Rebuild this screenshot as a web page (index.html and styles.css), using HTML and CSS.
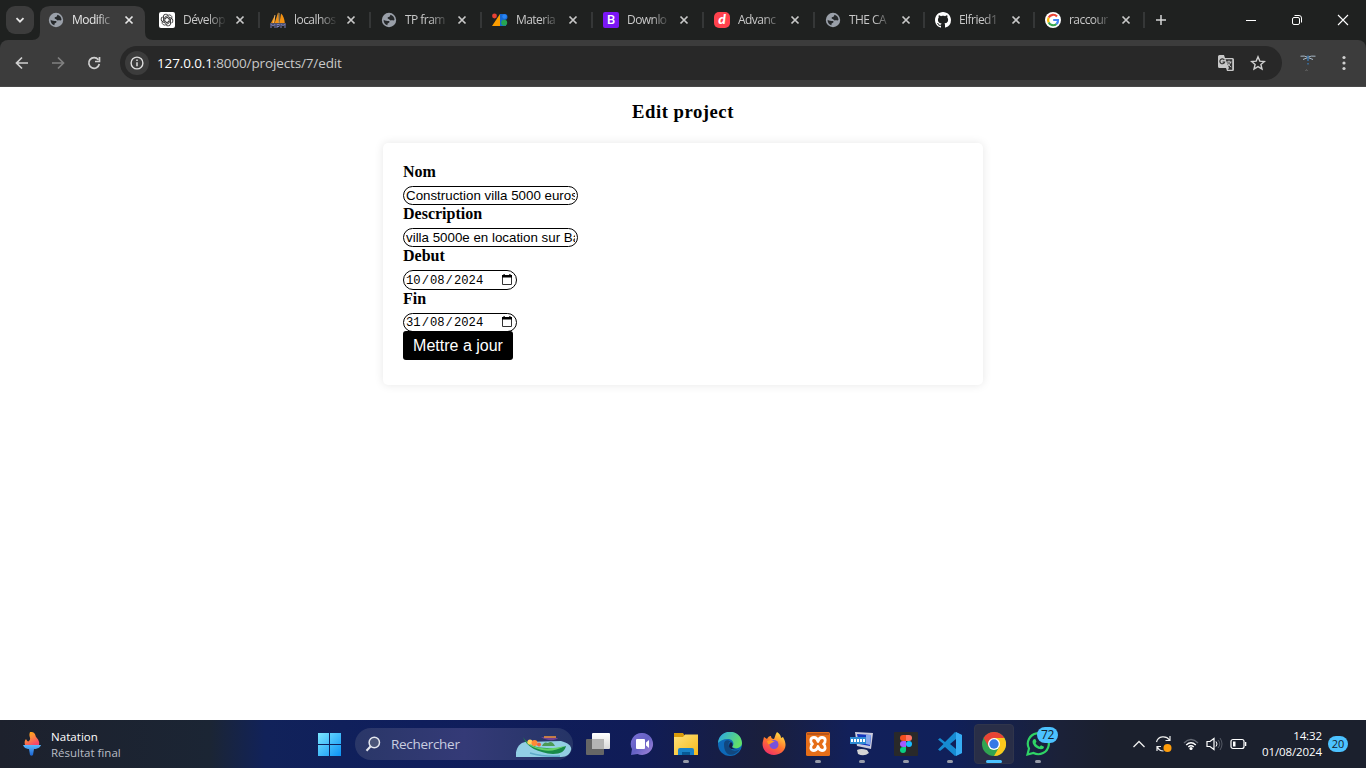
FILE: index.html
```html
<!DOCTYPE html>
<html lang="fr">
<head>
<meta charset="utf-8">
<title>Modification</title>
<link rel="stylesheet" href="styles.css">
</head>
<body>
<svg class="defs" width="0" height="0">
  <symbol id="globe" viewBox="0 0 16 16"><circle cx="8" cy="8" r="7.2" fill="#9aa0a9"/><path d="M2.600 7.800c1.500 1.700 3.700.8 5.200 1.300 1.600.5.300 1.800-.7 2.100-.8.300-.5 1-.7 2.100C3.800 12.700 2.400 10.300 2.600 7.800zM9.500 2.700c2.300.6 3.900 2.500 4 5-.8 1.500-2 .2-3 .6-1.500.5-2-1-3-1.300-1.300-.5-1.200-1.800.2-2 1.300-.2 1.200-1.200 1.800-2.300z" fill="#26292b"/></symbol>
  <symbol id="x" viewBox="0 0 10 10"><path d="M1.500 1.500l7 7m0-7l-7 7" stroke="currentColor" stroke-width="1.700" fill="none"/></symbol>
  <symbol id="calendar" viewBox="0 0 12 13"><path d="M1.500 3h9v8.500h-9z" fill="none" stroke="#333" stroke-width="1"/><path d="M1 2h10v2.500H1zM2.500 1h1.200v1.500H2.500zM8.300 1h1.200v1.500H8.300z" fill="#000"/></symbol>
</svg>
<header class="tabstrip">
  <div class="search-tabs"><svg width="10" height="10" viewBox="0 0 10 10"><path d="M1.500 3.200L5 6.700l3.500-3.500" fill="none" stroke="#e6e6e6" stroke-width="1.800"/></svg></div>
  <nav class="tabs">
    <div class="tab active"><svg class="shape" viewBox="0 0 121 34"><path d="M0 34Q8 34 8 26V10Q8 0 18 0H103Q113 0 113 10V26Q113 34 121 34z" fill="#3c3c3c"/></svg><svg class="fav"><use href="#globe"/></svg><span class="title">Modific</span><svg class="close"><use href="#x"/></svg></div>
    <div class="tab"><svg class="fav" viewBox="0 0 16 16"><rect width="16" height="16" rx="2" fill="#fff"/><g fill="none" stroke="#333" stroke-width=".9"><path id="petal" d="M5.800 9.300V5.200L9 3.300a2.600 2.600 0 0 1 3.900 2.600"/><use href="#petal" transform="rotate(60 8 8)"/><use href="#petal" transform="rotate(120 8 8)"/><use href="#petal" transform="rotate(180 8 8)"/><use href="#petal" transform="rotate(240 8 8)"/><use href="#petal" transform="rotate(300 8 8)"/></g></svg><span class="title">Dévelop</span><svg class="close"><use href="#x"/></svg><i class="sep"></i></div>
    <div class="tab"><svg class="fav" viewBox="0 0 16 16"><path d="M5 3L1 11h3.500zM8.200 0C7 4 5.500 8 4.800 11h4zM11 1.500c2.500 2 3.500 6 3.800 9.500H9.500z" fill="#f29111"/><path d="M5 3L3.500 11M9 1v10" stroke="#ffd08a" stroke-width=".7"/><path d="M1 16v-3.500l2 1.500 2-1.500V16m2 0v-3.500h2.300l-.3 2H7m4 1.500v-3.500l2 1 2-1V16M0 12h16" stroke="#7a7fb8" stroke-width="1" fill="none"/></svg><span class="title">localhos</span><svg class="close"><use href="#x"/></svg><i class="sep"></i></div>
    <div class="tab"><svg class="fav"><use href="#globe"/></svg><span class="title">TP fram</span><svg class="close"><use href="#x"/></svg><i class="sep"></i></div>
    <div class="tab"><svg class="fav" viewBox="0 0 16 16"><path d="M8 2v12H0z" fill="#fb9d00"/><circle cx="2.500" cy="4" r="2.400" fill="#e94235"/><path d="M8 2h4.500a3 3 0 0 1 0 6L14 11v3H8z" fill="#1769d2"/><circle cx="12.200" cy="10.800" r="3" fill="#27a552"/><circle cx="12.500" cy="4.500" r="2.200" fill="#2884f5"/></svg><span class="title">Materia</span><svg class="close"><use href="#x"/></svg><i class="sep"></i></div>
    <div class="tab"><span class="fav bootstrap">B</span><span class="title">Downlo</span><svg class="close"><use href="#x"/></svg><i class="sep"></i></div>
    <div class="tab"><span class="fav dribble">d</span><span class="title">Advanc</span><svg class="close"><use href="#x"/></svg><i class="sep"></i></div>
    <div class="tab narrow"><svg class="fav"><use href="#globe"/></svg><span class="title">THE CA</span><svg class="close"><use href="#x"/></svg><i class="sep"></i></div>
    <div class="tab narrow"><svg class="fav" viewBox="0 0 16 16"><path fill="#fff" d="M8 0C3.580 0 0 3.580 0 8c0 3.540 2.290 6.530 5.470 7.590.4.070.550-.17.550-.380 0-.19-.010-.82-.010-1.490-2.010.37-2.530-.49-2.690-.94-.090-.23-.48-.94-.82-1.130-.28-.15-.68-.52-.010-.53.630-.010 1.080.58 1.230.82.720 1.210 1.870.87 2.330.66.070-.52.280-.87.510-1.070-1.780-.2-3.640-.89-3.640-3.950 0-.87.310-1.590.82-2.150-.080-.2-.36-1.020.080-2.120 0 0 .67-.21 2.200.82.640-.18 1.320-.27 2-.27s1.360.090 2 .27c1.530-1.040 2.200-.82 2.200-.82.440 1.100.16 1.920.080 2.120.51.560.82 1.270.82 2.150 0 3.070-1.870 3.750-3.650 3.950.29.250.54.730.54 1.480 0 1.070-.010 1.930-.010 2.200 0 .21.150.46.550.38A8 8 0 0 0 16 8c0-4.420-3.580-8-8-8z"/></svg><span class="title">Elfried1</span><svg class="close"><use href="#x"/></svg><i class="sep"></i></div>
    <div class="tab narrow"><svg class="fav" viewBox="0 0 16 16"><circle cx="8" cy="8" r="8" fill="#fff"/><g fill="none" stroke-width="2.200"><path d="M12 4.500A5 5 0 0 0 3.700 5.600" stroke="#ea4335"/><path d="M3.700 5.600a5 5 0 0 0 0 4.800" stroke="#fbbc05"/><path d="M3.700 10.400A5 5 0 0 0 11.500 12" stroke="#34a853"/><path d="M11.500 12A5 5 0 0 0 13 8H8.200" stroke="#4285f4"/></g></svg><span class="title">raccour</span><svg class="close"><use href="#x"/></svg><i class="sep"></i></div>
  </nav>
  <svg class="newtab" width="12" height="12" viewBox="0 0 12 12"><path d="M6 1v10M1 6h10" stroke="#d5d5d5" stroke-width="1.500"/></svg>
  <div class="winctl">
    <svg viewBox="0 0 12 12"><path d="M1 6.500h10" stroke="#fff"/></svg>
    <svg viewBox="0 0 12 12"><g fill="none" stroke="#fff"><rect x="1.500" y="3.500" width="7" height="7" rx="1.500"/><path d="M3.500 1.500H8a2.500 2.500 0 0 1 2.500 2.500v4.500"/></g></svg>
    <svg viewBox="0 0 12 12"><path d="M1 1l10 10M11 1L1 11" stroke="#fff" stroke-width="1.100"/></svg>
  </div>
</header>
<div class="toolbar-wrap">
<div class="toolbar">
  <svg class="nav" viewBox="0 0 16 16"><path d="M14 8H3M8 2.500L2.500 8 8 13.500" fill="none" stroke="#d0d0d0" stroke-width="1.700"/></svg>
  <svg class="nav" viewBox="0 0 16 16"><path d="M2 8h11M8 2.500L13.500 8 8 13.500" fill="none" stroke="#808080" stroke-width="1.700"/></svg>
  <svg class="nav" viewBox="0 0 16 16"><path d="M12.300 4.700A5.300 5.300 0 1 0 13.300 9M13.500 2v4.500H9" fill="none" stroke="#d0d0d0" stroke-width="1.700"/></svg>
  <div class="omnibox">
    <span class="info"><svg width="14" height="14" viewBox="0 0 14 14"><circle cx="7" cy="7" r="5.900" fill="none" stroke="#ddd" stroke-width="1.400"/><path d="M7 6.200v4M7 3.500V5" stroke="#ddd" stroke-width="1.500"/></svg></span>
    <span class="url"><b>127.0.0.1</b>:8000/projects/7/edit</span>
    <svg class="translate" viewBox="0 0 18 18"><path d="M2.500 1H7l1 3h7.500A1.500 1.500 0 0 1 17 5.500v10a1.500 1.500 0 0 1-1.500 1.500H10l-1-3H2.500A1.500 1.500 0 0 1 1 12.500v-10A1.500 1.500 0 0 1 2.500 1z" fill="#c7c7c7"/><path d="M8.500 5.200h6.700v10.500h-4.500L12 14z" fill="#333"/><path d="M9.500 8h5M12 6.500V8m1.700 0c-.5 2-2 3.500-3.700 4.500M10.700 9c.6 1.500 2 3 3.500 4" fill="none" stroke="#ccc"/><path d="M7.300 6A2.400 2.400 0 1 0 7.600 8H5.500" fill="none" stroke="#333" stroke-width="1.200"/></svg>
    <svg class="star" viewBox="0 0 16 16"><path d="M8 1.800l1.800 4.300 4.600.4-3.500 3 1.100 4.500-4-2.400L4 14l1.100-4.500-3.500-3 4.600-.4z" fill="none" stroke="#d0d0d0" stroke-width="1.400"/></svg>
  </div>
  <svg class="avatar" viewBox="0 0 20 20"><path d="M2.500 3.200q4-.7 7 1 4-1.700 8-1M5 6.500l5-2 5 2" stroke="#a9b9c7" fill="none"/><path d="M10 2.500V8M10 10v1.500" stroke="#3973a8" stroke-width="1.500"/><path d="M7.500 18l1-1.500 1 1.500" stroke="#666" fill="none"/></svg>
  <svg class="menu" viewBox="0 0 4 16"><g fill="#d0d0d0"><circle cx="2" cy="2.500" r="1.600"/><circle cx="2" cy="8" r="1.600"/><circle cx="2" cy="13.500" r="1.600"/></g></svg>
</div>
</div>
<main class="page">
  <h1>Edit project</h1>
  <form class="card">
    <label>Nom</label>
    <div class="field"><span>Construction villa 5000 euros</span></div>
    <label>Description</label>
    <div class="field"><span>villa 5000e en location sur Ba</span></div>
    <label>Debut</label>
    <div class="field date tall"><span>10</span>/<span>08</span>/<span>2024</span><svg><use href="#calendar"/></svg></div>
    <label>Fin</label>
    <div class="field date"><span>31</span>/<span>08</span>/<span>2024</span><svg><use href="#calendar"/></svg></div>
    <button type="button">Mettre a jour</button>
  </form>
</main>
<footer class="taskbar">
  <div class="widget">
    <svg width="20" height="26" viewBox="0 0 20 26"><defs><linearGradient id="fl" x2=".6" y2="1"><stop stop-color="#ffb400"/><stop offset=".5" stop-color="#ff8a3c"/><stop offset="1" stop-color="#f5486a"/></linearGradient><linearGradient id="tb" x2="0" y2="1"><stop stop-color="#5bb8ff"/><stop offset="1" stop-color="#1a62d0"/></linearGradient></defs><path d="M8 1c5 0 5 2 6 5 2 2 4 5 3 8H3C2 11 3 9 4 8c1 2 2 3 3 2 3-3-1-4 1-9z" fill="url(#fl)"/><path d="M1 14h18c-1 3-4 3.500-5 4h-2l-1 6q-1.500 1.500-3 0l-1-6H6C4 17.500 2 17 1 14z" fill="url(#tb)"/></svg>
    <div><strong>Natation</strong><span>Résultat final</span></div>
  </div>
  <svg class="start" viewBox="0 0 23 23"><defs><linearGradient id="win" gradientUnits="userSpaceOnUse" x2="23" y2="23"><stop stop-color="#7be6ff"/><stop offset="1" stop-color="#0b92f5"/></linearGradient></defs><path d="M0 0h11v11H0zm12 0h11v11H12zM0 12h11v11H0zm12 0h11v11H12z" fill="url(#win)"/></svg>
  <div class="search">
    <svg width="16" height="16" viewBox="0 0 16 16"><circle cx="9.300" cy="6.500" r="5.200" fill="#4a5579" stroke="#e3e6ee" stroke-width="1.500"/><path d="M5.700 10.300L1.500 14.700" stroke="#e3e6ee" stroke-width="2"/></svg>
    <span>Rechercher</span>
    <svg class="boat" viewBox="0 0 56 22"><path d="M0 21C-1 12 4 7 9 6l36-1c7 2 11 5 10 9-1 4-4 7-10 7z" fill="#92cfe4"/><path d="M14 17q14 4 30 3" stroke="#5eaac7" stroke-width="1.500" fill="none"/><path d="M7 1c5 8 13 11 24 11 7 1 13 0 19-2-1 5-5 8-13 8C23 17 10 11 7 1z" fill="#188a49"/><path d="M9 4c7 8 20 11 40 6-8 4-15 6-23 4C17 12 12 9 9 4z" fill="#65d268"/><circle cx="14" cy="6" r="2.600" fill="#ffd160"/><circle cx="18.500" cy="7" r="3" fill="#ff8a35"/><circle cx="23" cy="8.500" r="2" fill="#f0643b"/><path d="M26 10q2-5 6-3 4-3 7 3z" fill="#4b9a55"/><path d="M25 1l17 1c-2 3-12 3-17-1z" fill="#704093"/><path d="M28 1h12" stroke="#f3963b" stroke-width="1.500"/></svg>
  </div>
  <div class="apps">
    <div class="app"><svg viewBox="0 0 24 24"><defs><linearGradient id="tv" x2="0" y2="1"><stop stop-color="#fff"/><stop offset="1" stop-color="#d8d8d8"/></linearGradient></defs><rect x="6" y="1" width="18" height="16" rx="1" fill="url(#tv)"/><rect x="0" y="7" width="18" height="16" rx="1" fill="#666"/><path d="M6 7h12v10H6z" fill="#b4b4b4"/></svg></div>
    <div class="app"><svg viewBox="0 0 24 24"><defs><linearGradient id="tm" x2="1" y2="1"><stop stop-color="#7a6fd6"/><stop offset=".5" stop-color="#6461c4"/><stop offset="1" stop-color="#a887dc"/></linearGradient></defs><path d="M12.500 1a11 11 0 1 1-5 21L1 23l1-6A11 11 0 0 1 12.500 1z" fill="url(#tm)"/><rect x="6" y="7" width="9" height="10" rx="1" fill="#fff"/><path d="M16 10.500L19 8v8l-3-2.500z" fill="#fff"/></svg></div>
    <div class="app run"><svg viewBox="0 0 24 24"><defs><linearGradient id="fo" x2="1" y2="1"><stop stop-color="#ffe27a"/><stop offset="1" stop-color="#f6b91b"/></linearGradient></defs><path d="M0 1h9l2 3-2 3H0z" fill="#d99a09"/><path d="M0 5h9l2-2.500h13V23H0z" fill="url(#fo)"/><path d="M4 23v-5q0-2 2-2h12q2 0 2 2v5z" fill="#1982c8"/><path d="M8 20h8v3H8z" fill="#075996"/></svg></div>
    <div class="app"><svg viewBox="0 0 24 24"><defs><linearGradient id="ed" x2="1" y2=".4"><stop stop-color="#28a5ee"/><stop offset="1" stop-color="#62df69"/></linearGradient></defs><circle cx="12" cy="12" r="12" fill="#0d69b8"/><path d="M0 11C1-4 23-4 24 11c0 6-8 6-10 4 3-3 1-8-4-8-5 0-8 2-10 4z" fill="url(#ed)"/><path d="M6 12c0-4 4-5 7-2-3 0-3 3-1 6 3 4 7 3 10 1-5 8-16 9-16-5z" fill="#11477f"/><path d="M13 10c2 1 2 3 1 5 2 3 6 2 8 1-3 2-11 2-11-2q0-3 2-4z" fill="#161d43"/></svg></div>
    <div class="app"><svg viewBox="0 0 24 24"><defs><linearGradient id="ff" x1=".8" x2=".2" y2="1"><stop stop-color="#ffe845"/><stop offset=".5" stop-color="#ff762d"/><stop offset="1" stop-color="#ef286d"/></linearGradient></defs><path d="M15 0c3 2 4 4 4 6l2-1c7 12-2 18-9 18C4 23-1 16 1 9l1-4 3 2c1-2 2-3 4-3 0 2 1 3 3 3 1-2 1-4 3-7z" fill="url(#ff)"/><circle cx="12" cy="12.500" r="4.500" fill="#7751db"/><path d="M5 9c5-2 6 0 8 1-4 0-4 3-7 2z" fill="#ff9b21"/></svg></div>
    <div class="app run"><svg viewBox="0 0 24 24"><rect width="24" height="24" rx="1.500" fill="#e66e18"/><path d="M1 1h22v2H1z" fill="#b9551a"/><path d="M12 9.500Q11 5.500 8 5.500c-4 0-4 4.500-1.500 6.500C4 14 4 18.500 8 18.500q3 0 4-4 1 4 4 4c4 0 4-4.500 1.500-6.500C20 10 20 5.500 16 5.500q-3 0-4 4z" fill="none" stroke="#fff" stroke-width="2.800" stroke-linejoin="round"/></svg></div>
    <div class="app run"><svg viewBox="0 0 24 24"><path d="M5 0l18 1-2 16L7 14z" fill="#ccd"/><path d="M7 2l14 1-1 11-11-2z" fill="#1535bd"/><path d="M16 3h5l-1 10-4-1z" fill="#87a8ee"/><rect y="5" width="16" height="7" fill="#2e8cd4"/><path d="M1 8.500h14" stroke="#fff" stroke-width="3" stroke-dasharray="2 1"/><path d="M7 18q4-2 10 0l2 3q-5 4-11 1z" fill="#d5d5d5"/></svg></div>
    <div class="app run"><svg viewBox="0 0 24 24"><rect width="24" height="24" rx="1" fill="#292929"/><path d="M9 3h3v6H9a3 3 0 0 1 0-6z" fill="#f24e1e"/><path d="M12 3h3a3 3 0 0 1 0 6h-3z" fill="#ff7262"/><path d="M9 9h3v6H9a3 3 0 0 1 0-6z" fill="#a259ff"/><circle cx="15" cy="12" r="3" fill="#1abcfe"/><path d="M9 15h3v3a3 3 0 1 1-3-3z" fill="#0acf83"/></svg></div>
    <div class="app run"><svg viewBox="0 0 24 24"><path d="M17 0l7 3v18l-7 3L7 15l-5 4-2-1.500L5.500 12 0 7.500 2 6l5 4zm1 7l-6 5 6 5z" fill="#168bd2"/><path d="M18 0l6 3v18l-6 3z" fill="#36adf4"/></svg></div>
    <div class="app current"><svg viewBox="0 0 24 24"><circle cx="12" cy="12" r="12" fill="#30a451"/><path d="M1.600 6A12 12 0 0 1 22.400 6H12l-5.200 9z" fill="#e84435"/><path d="M12 6h10.400A12 12 0 0 1 12 24l5.200-9z" fill="#fbc91c"/><circle cx="12" cy="12" r="6" fill="#fff"/><circle cx="12" cy="12" r="4.700" fill="#3478e6"/></svg></div>
    <div class="app run"><svg viewBox="0 0 24 24"><path d="M1.500 22.500l1.500-6A10.500 10.500 0 1 1 7.500 21z" fill="none" stroke="#2fd366" stroke-width="2.200"/><path d="M8 7l1.500.3 1 2.500-1 1.400q1.300 2.500 4 3.500l1.500-1.500 3 1.500c0 5-11 2-11.500-5Q6.500 8 8 7z" fill="#2fd366"/></svg><span class="badge">72</span></div>
  </div>
  <div class="tray">
    <svg width="14" height="10" viewBox="0 0 14 10"><path d="M1.500 8L7 2.500 12.500 8" fill="none" stroke="#eee" stroke-width="1.300"/></svg>
    <svg class="sync" viewBox="0 0 17 18"><path d="M1.500 7C3 1 11 0 14.500 5M15 1v4.500h-4.500M2 16v-4.500h4M2.500 12q1.500 4 6 4" fill="none" stroke="#eee" stroke-width="1.200"/><circle cx="12.500" cy="13" r="4" fill="#ff9d0b"/></svg>
    <svg class="wifi" viewBox="0 0 16 14"><path d="M1 6Q8-1 15 6" fill="none" stroke="#666b75" stroke-width="1.300"/><path d="M3.200 8Q8 3.500 12.800 8M5.300 10Q8 7.500 10.700 10" fill="none" stroke="#fff" stroke-width="1.400"/><circle cx="8" cy="11.500" r="1.600" fill="#fff"/></svg>
    <svg class="sound" viewBox="0 0 17 14"><path d="M1 4.500h3L8 1.500v11l-4-3H1z" fill="none" stroke="#fff" stroke-width="1.200"/><path d="M10 4.500q2 2.500 0 5" fill="none" stroke="#fff"/><path d="M12 3q3.500 4 0 8M14 1q4 6 0 12" fill="none" stroke="#555a65"/></svg>
    <svg class="battery" viewBox="0 0 17 12"><rect x="1" y="1.500" width="13" height="9" rx="2" fill="none" stroke="#fff" stroke-width="1.200"/><path d="M3 3.500h2.500v5H3zM15 4h1.300v4H15z" fill="#fff"/></svg>
    <div class="clock"><span>14:32</span><span>01/08/2024</span></div>
    <span class="count">20</span>
  </div>
</footer>
</body>
</html>
```
FILE: styles.css
```css
* { box-sizing: border-box; }
body { margin: 0; width: 1366px; height: 768px; overflow: hidden; display: flex; flex-direction: column; background: #fff; font-family: "Open Sans", "Noto Sans", sans-serif; }
svg { display: block; flex: none; }
.defs { position: absolute; }
.tabstrip { height: 40px; background: #1f2120; display: flex; align-items: center; flex: none; }
.search-tabs { width: 28px; height: 28px; margin: 0 4px 0 6px; border-radius: 9px; background: #3c3c3c; display: flex; align-items: center; justify-content: center; }
.tabs { display: flex; height: 40px; }
.tab { width: 111px; height: 40px; padding-left: 10px; display: flex; align-items: center; position: relative; color: #c8c8c8; }
.tab.narrow { width: 110px; }
.tab.active { color: #e6e6e6; }
.shape { position: absolute; left: -6px; top: 6px; width: 121px; height: 34px; }
.fav { width: 16px; height: 16px; position: relative; flex: none; }
.bootstrap { background: #7b16f5; border-radius: 2px; color: #fff; font: 500 13px/16px Roboto, sans-serif; text-align: center; }
.dribble { background: #ff424d; border-radius: 5px; color: #fff; font: italic 900 14px/14px Lato, sans-serif; text-align: center; }
.title { position: relative; width: 42px; margin-left: 8px; white-space: nowrap; font-size: 12px; letter-spacing: -.55px; line-height: 18px; -webkit-mask-image: linear-gradient(90deg, #000 60%, rgba(0,0,0,.1)); mask-image: linear-gradient(90deg, #000 60%, rgba(0,0,0,.1)); }
.close { position: relative; width: 10px; height: 10px; margin-left: 10px; }
.narrow .close { margin-left: 11px; }
.narrow .title { width: 41px; }
.sep { width: 2px; height: 16px; margin-left: auto; background: #353737; }
.newtab { margin-left: 10px; }
.winctl { margin-left: auto; display: flex; gap: 34px; padding-right: 17px; }
.winctl svg { width: 12px; height: 12px; }
.toolbar-wrap { flex: none; background: #1f2120; }
.toolbar { height: 47px; display: flex; align-items: center; background: #3c3c3c; border-radius: 8px 8px 0 0; padding: 0 20px 0 14px; border-bottom: 1px solid #484848; }
.nav { width: 16px; height: 16px; margin-right: 20px; }
.nav + .nav + .nav { margin-right: 18px; }
.omnibox { width: 1162px; height: 34px; border-radius: 17px; background: #282828; display: flex; align-items: center; padding: 0 16px 0 5px; }
.info { width: 24px; height: 24px; border-radius: 50%; background: #3c3c3c; display: flex; align-items: center; justify-content: center; }
.url { margin-left: 8px; font-size: 13.500px; letter-spacing: -.13px; color: #c9c9c9; flex: 1; white-space: nowrap; }
.url b { font-weight: 400; color: #fff; }
.translate { width: 18px; height: 18px; margin-right: 15px; }
.star { width: 16px; height: 16px; }
.avatar { width: 20px; height: 20px; margin-left: 16px; }
.menu { width: 4px; height: 16px; margin-left: auto; }
.page { flex: 1; color: #000; }
h1 { margin: 14px 0 20px; text-align: center; font: bold 18.720px/22px "Liberation Serif", serif; letter-spacing: .5px; }
.card { width: 600px; height: 242px; margin: 0 auto; padding: 20px; border-radius: 5px; background: #fff; box-shadow: 0 0 10px rgba(0,0,0,.1); display: flex; flex-direction: column; align-items: flex-start; }
label { height: 18px; margin-bottom: 5px; font: bold 16px/18px "Liberation Serif", serif; }
.field { width: 175px; height: 19px; flex: none; border: 1px solid #000; border-radius: 10px; padding: 0 2px; font: 13.330px/17px "Liberation Sans", sans-serif; }
.field > span { display: block; overflow: hidden; white-space: nowrap; }
.date { width: 114px; display: flex; align-items: center; font: 12.200px/18px "Liberation Mono", monospace; }
.date > span { padding: 0 1px 0 0; }
.date > span + span { padding-left: 1px; }
.date svg { width: 12px; height: 13px; margin: -2px 1px 0 auto; }
.tall { height: 20px; padding-top: 1px; }
.tall svg { margin-top: -3px; }
button { position: relative; width: 110px; height: 29px; flex: none; margin: -1px 0 0; padding: 0; border: 0; border-radius: 3px; background: #000; color: #fff; font: 16px "Liberation Sans", sans-serif; }
.taskbar { height: 48px; flex: none; display: flex; align-items: center; position: relative; color: #fff; font-size: 12px; background: linear-gradient(90deg, #1d212d 0, #1b2534 210px, #11225a 265px, #0f1e5c 420px, #101c57 640px, #1a1f3c 765px, #12205a 850px, #10205a 950px, #1b2138 1060px, #1b202d 1110px); }
.widget { width: 295px; padding-left: 22px; display: flex; align-items: center; gap: 9px; line-height: 16px; font-size: 11.500px; }
.widget > div { margin-top: 2px; }
.widget strong, .widget div span { display: block; font-weight: 400; }
.widget strong { letter-spacing: .05px; }
.widget div span { color: #b9bdc5; }
.start { width: 23px; height: 23px; margin-left: 23px; }
.search { width: 218px; height: 32px; margin-left: 14px; border-radius: 16px; background: linear-gradient(90deg, #2a3768, #343a77 50%, #253466); display: flex; align-items: center; padding-left: 10px; overflow: hidden; }
.search span { margin-left: 10px; font-size: 13.500px; letter-spacing: -.3px; color: #c9cde0; }
.boat { width: 56px; height: 22px; margin: 6px 1px 0 auto; }
.apps { display: flex; margin-left: 3px; }
.app { width: 44px; height: 48px; display: flex; align-items: center; justify-content: center; position: relative; }
.app svg { width: 24px; height: 24px; position: relative; }
.run::after, .current::after { content: ""; position: absolute; bottom: 5px; left: 19px; width: 6px; height: 3px; border-radius: 2px; background: #969ba9; }
.current::after { left: 14px; width: 16px; background: #4cc2ff; }
.current::before { content: ""; position: absolute; inset: 4px 2px; border-radius: 4px; background: #292e47; border: 1px solid #30354b; }
.badge { position: absolute; left: 21px; top: 7px; width: 21px; height: 16px; border-radius: 8px; background: #4cc2ff; color: #14212e; text-align: center; font-size: 12px; line-height: 16px; letter-spacing: -.4px; }
.tray { margin-left: auto; display: flex; align-items: center; padding-right: 18px; }
.sync { width: 17px; height: 18px; margin-left: 9px; }
.wifi { width: 16px; height: 14px; margin-left: 11px; }
.sound { width: 17px; height: 14px; margin-left: 7px; }
.battery { width: 17px; height: 12px; margin-left: 7px; }
.clock { width: 75px; text-align: right; line-height: 16px; font-size: 11.500px; letter-spacing: -.1px; }
.clock span { display: block; }
.count { width: 20px; height: 16px; margin-left: 6px; border-radius: 8px; background: #4cc2ff; color: #14212e; text-align: center; font-size: 11px; line-height: 16px; }
```
